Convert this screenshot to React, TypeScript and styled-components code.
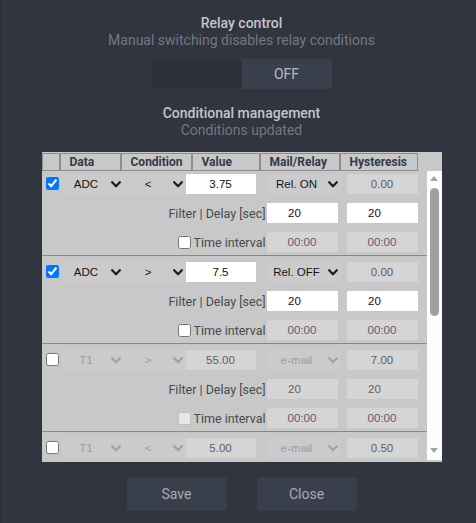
import React from "react";
import styled, { createGlobalStyle } from "styled-components";

const GlobalStyle = createGlobalStyle`
  html, body {
    margin: 0;
    padding: 0;
    background: #30353f;
  }
  body {
    font-family: "Roboto", "Noto Sans", sans-serif;
  }
`;

type Rule = {
  enabled: boolean;
  data: string;
  op: string;
  value: string;
  action: string;
  hysteresis: string;
  filter: string;
  delay: string;
};

const rules: Rule[] = [
  { enabled: true, data: "ADC", op: "<", value: "3.75", action: "Rel. ON", hysteresis: "0.00", filter: "20", delay: "20" },
  { enabled: true, data: "ADC", op: ">", value: "7.5", action: "Rel. OFF", hysteresis: "0.00", filter: "20", delay: "20" },
  { enabled: false, data: "T1", op: ">", value: "55.00", action: "e-mail", hysteresis: "7.00", filter: "20", delay: "20" },
  { enabled: false, data: "T1", op: "<", value: "5.00", action: "e-mail", hysteresis: "0.50", filter: "20", delay: "20" },
];

const Chevron = ({ muted }: { muted?: boolean }) => (
  <svg width="10" height="7" viewBox="0 0 10 7">
    <path
      d="M1.2 1.3 L5 5.2 L8.8 1.3"
      fill="none"
      stroke={muted ? "#a2a2a2" : "#1e1e1e"}
      strokeWidth="2.3"
      strokeLinecap="round"
      strokeLinejoin="round"
    />
  </svg>
);

const App = () => {
  return (
    <>
      <GlobalStyle />
      <Page>
        <Title>Relay control</Title>
        <Subtitle>Manual switching disables relay conditions</Subtitle>
        <Toggle>
          <ToggleHalf />
          <ToggleHalf $active>OFF</ToggleHalf>
        </Toggle>
        <Title $gap>Conditional management</Title>
        <Subtitle>Conditions updated</Subtitle>

        <Panel>
          <HeaderRow>
            <HeadCell />
            <HeadCell>Data</HeadCell>
            <HeadCell>Condition</HeadCell>
            <HeadCell>Value</HeadCell>
            <HeadCell>Mail/Relay</HeadCell>
            <HeadCell>Hysteresis</HeadCell>
          </HeaderRow>
          <Body>
            <RowsViewport>
              <RowsList>
                {rules.map((r, i) => (
                  <Row key={i}>
                    <CheckCell>
                      <Check type="checkbox" defaultChecked={r.enabled} />
                    </CheckCell>
                    <Select $muted={!r.enabled}>
                      <span>{r.data}</span>
                      <Chevron muted={!r.enabled} />
                    </Select>
                    <Select $muted={!r.enabled}>
                      <span>{r.op}</span>
                      <Chevron muted={!r.enabled} />
                    </Select>
                    <Field $editable={r.enabled} $width={70}>
                      {r.value}
                    </Field>
                    <Select $muted={!r.enabled} $width={72}>
                      <span>{r.action}</span>
                      <Chevron muted={!r.enabled} />
                    </Select>
                    <Field $width={71} $offset={1}>
                      {r.hysteresis}
                    </Field>

                    <Label>Filter | Delay [sec]</Label>
                    <Field $editable={r.enabled} $number $width={71} $offset={1}>
                      {r.filter}
                    </Field>
                    <Field $editable={r.enabled} $number $width={71} $offset={1}>
                      {r.delay}
                    </Field>

                    <Label>
                      <SmallCheck type="checkbox" disabled={!r.enabled} />
                      Time interval
                    </Label>
                    <Field $width={71} $offset={1}>
                      00:00
                    </Field>
                    <Field $width={71} $offset={1}>
                      00:00
                    </Field>
                  </Row>
                ))}
              </RowsList>
            </RowsViewport>
            <Scrollbar>
              <Arrow />
              <Thumb />
              <Spacer />
              <Arrow $down />
            </Scrollbar>
          </Body>
        </Panel>

        <Buttons>
          <Button>Save</Button>
          <Button>Close</Button>
        </Buttons>
      </Page>
    </>
  );
};

const Page = styled.div`
  width: 476px;
  height: 523px;
  box-sizing: border-box;
  padding: 14px 0 0 6px;
  display: flex;
  flex-direction: column;
  align-items: center;
  background: #30353f;
  border-left: 1px solid #2a2e37;
`;

const Title = styled.div<{ $gap?: boolean }>`
  margin-top: ${(p) => (p.$gap ? "15px" : "0")};
  font-size: 14px;
  line-height: 18px;
  font-weight: 500;
  color: #c4c5c8;
`;

const Subtitle = styled.div`
  font-size: 14px;
  line-height: 17px;
  color: #75787e;
`;

const Toggle = styled.div`
  margin-top: 10px;
  width: 180px;
  height: 30px;
  display: flex;
  border-radius: 3px;
  background: #3a404b;
  overflow: hidden;
`;

const ToggleHalf = styled.div<{ $active?: boolean }>`
  flex: 1;
  display: flex;
  align-items: center;
  justify-content: center;
  font-size: 14px;
  color: #b9bbbf;
  background: ${(p) => (p.$active ? "#3a404b" : "#2c313a")};
  border-radius: 3px;
`;

const Panel = styled.div`
  margin-top: 13px;
  width: 400px;
  height: 310px;
  box-sizing: border-box;
  padding: 1px 0 2px;
  background: #c8c8c8;
  display: flex;
  flex-direction: column;
`;

const HeaderRow = styled.div`
  display: grid;
  grid-template-columns: 18px 61px 71px 68px 80px 78px;
  height: 18px;
`;

const HeadCell = styled.div`
  box-sizing: border-box;
  border: 1px solid #8e8e8e;
  padding-left: 9px;
  font-size: 12px;
  line-height: 16px;
  font-weight: 700;
  color: #343a46;
  white-space: nowrap;
`;

const Body = styled.div`
  flex: 1;
  display: flex;
  min-height: 0;
`;

const RowsViewport = styled.div`
  flex: 1;
  overflow: hidden;
`;

const RowsList = styled.div`
  margin-top: -3px;
`;

const Row = styled.div`
  display: grid;
  grid-template-columns: 20px 62px 62px 80px 80px 80px;
  grid-auto-rows: 20px;
  row-gap: 9px;
  padding: 6px 0 3px;
  border-bottom: 1px solid #8a8a8a;
`;

const CheckCell = styled.div`
  display: flex;
  align-items: flex-start;
  padding: 3px 0 0 4px;
`;

const Check = styled.input`
  width: 13px;
  height: 13px;
  margin: 0;
`;

const SmallCheck = styled(Check)`
  margin-right: 3px;
`;

const Select = styled.div<{ $muted?: boolean; $width?: number }>`
  width: ${(p) => (p.$width ? `${p.$width}px` : "auto")};
  display: flex;
  align-items: center;
  padding-right: 3px;
  background: #cbcbcb;
  font-family: "Liberation Sans", Arial, sans-serif;
  font-size: 11.5px;
  color: ${(p) => (p.$muted ? "#9c9c9c" : "#151515")};
  > span {
    flex: 1;
    text-align: center;
  }
`;

const Field = styled.div<{
  $editable?: boolean;
  $number?: boolean;
  $width: number;
  $offset?: number;
}>`
  width: ${(p) => p.$width}px;
  margin-left: ${(p) => p.$offset || 0}px;
  box-sizing: border-box;
  display: flex;
  align-items: center;
  justify-content: center;
  padding-right: ${(p) => (p.$number ? "15px" : "0")};
  background: ${(p) => (p.$editable ? "#ffffff" : "#d5d5d5")};
  font-family: "Liberation Sans", Arial, sans-serif;
  font-size: 11.5px;
  color: ${(p) => (p.$editable ? "#111111" : "#5b606b")};
`;

const Label = styled.div`
  grid-column: 1 / 5;
  display: flex;
  align-items: center;
  justify-content: flex-end;
  font-size: 12.5px;
  color: #474a50;
  white-space: nowrap;
`;

const Scrollbar = styled.div`
  width: 15px;
  background: #fdfdfd;
  display: flex;
  flex-direction: column;
  align-items: center;
  padding: 5px 0 7px;
  box-sizing: border-box;
`;

const Arrow = styled.div<{ $down?: boolean }>`
  width: 0;
  height: 0;
  border-left: 4.5px solid transparent;
  border-right: 4.5px solid transparent;
  ${(p) =>
    p.$down
      ? "border-top: 5px solid #a3a3a3;"
      : "border-bottom: 5px solid #a3a3a3;"}
`;

const Thumb = styled.div`
  margin-top: 7px;
  width: 9px;
  height: 128px;
  border-radius: 5px;
  background: #a0a0a0;
`;

const Spacer = styled.div`
  flex: 1;
`;

const Buttons = styled.div`
  margin-top: 15px;
  display: flex;
  gap: 30px;
`;

const Button = styled.button`
  width: 100px;
  height: 34px;
  border: none;
  border-radius: 4px;
  background: #3a404b;
  color: #a9abb0;
  font-family: "Roboto", "Noto Sans", sans-serif;
  font-size: 14px;
  cursor: pointer;
`;

export default App;
